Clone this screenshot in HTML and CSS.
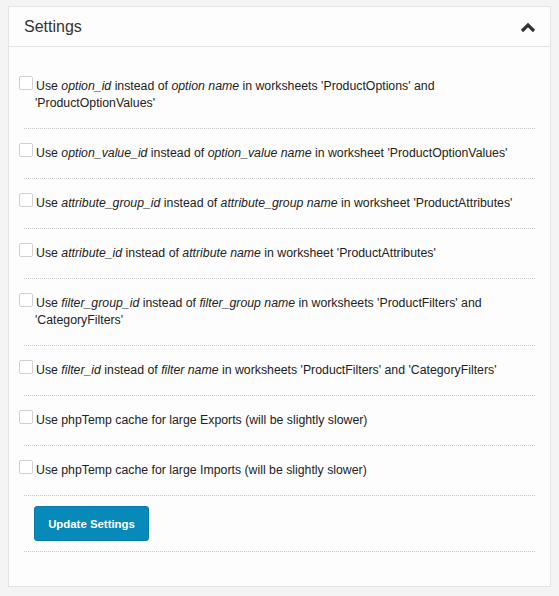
FILE: index.html
```html
<!DOCTYPE html>
<html>
<head>
<meta name="viewport" content="width=device-width, initial-scale=1">
<link rel="stylesheet" href="styles.css">
</head>
<body>

<div class="panel">
	<div class="panel-heading">
		<h3 class="panel-title">Settings</h3>
		<svg class="chevron" width="16" height="11" viewBox="0 0 16 11"><polyline points="2,9 8,3 14,9" fill="none" stroke="#333" stroke-width="3.2"/></svg>
	</div>
	<div class="panel-body">
		<div class="form-row">
			<label class="check"><span class="box"></span>Use <i>option_id</i> instead of <i>option name</i> in worksheets 'ProductOptions' and 'ProductOptionValues'</label>
		</div>
		<div class="form-row">
			<label class="check"><span class="box"></span>Use <i>option_value_id</i> instead of <i>option_value name</i> in worksheet 'ProductOptionValues'</label>
		</div>
		<div class="form-row">
			<label class="check"><span class="box"></span>Use <i>attribute_group_id</i> instead of <i>attribute_group name</i> in worksheet 'ProductAttributes'</label>
		</div>
		<div class="form-row">
			<label class="check"><span class="box"></span>Use <i>attribute_id</i> instead of <i>attribute name</i> in worksheet 'ProductAttributes'</label>
		</div>
		<div class="form-row">
			<label class="check"><span class="box"></span>Use <i>filter_group_id</i> instead of <i>filter_group name</i> in worksheets 'ProductFilters' and 'CategoryFilters'</label>
		</div>
		<div class="form-row">
			<label class="check"><span class="box"></span>Use <i>filter_id</i> instead of <i>filter name</i> in worksheets 'ProductFilters' and 'CategoryFilters'</label>
		</div>
		<div class="form-row">
			<label class="check"><span class="box"></span>Use phpTemp cache for large Exports (will be slightly slower)</label>
		</div>
		<div class="form-row">
			<label class="check"><span class="box"></span>Use phpTemp cache for large Imports (will be slightly slower)</label>
		</div>
		<div class="form-row button-row">
			<button class="btn-primary">Update Settings</button>
		</div>
	</div>
</div>

</body>
</html>
```

FILE: styles.css
```css
body {
	margin: 0;
	padding: 6px 8px 0 8px;
	background: #f4f4f4;
	font-family: "Liberation Sans", Arial, sans-serif;
	font-size: 12.3px;
	color: #222;
}

.panel {
	box-sizing: border-box;
	width: 543px;
	height: 581px;
	background: #fdfdfd;
	border: 1px solid #e4e4e4;
}

.panel-heading {
	display: flex;
	justify-content: space-between;
	align-items: center;
	height: 39px;
	padding: 0 14px 0 15px;
	border-bottom: 1px solid #e4e4e4;
}

.panel-title {
	margin: 0;
	font-size: 16px;
	font-weight: normal;
	color: #333;
}

.chevron {
	display: block;
	margin-top: 1px;
}

.panel-body {
	padding: 15px 15px 0 15px;
}

.form-row {
	padding: 16px 0;
	border-bottom: 1px dotted #c8c8c8;
	line-height: 17px;
}

.check {
	display: block;
	margin-left: -5px;
	padding-left: 16px;
}

.box {
	float: left;
	width: 14px;
	height: 14px;
	box-sizing: border-box;
	border: 1px solid #d0d0d0;
	border-radius: 2px;
	background: #fff;
	margin: -2px 3px 0 -16px;
}

.button-row {
	padding: 10px;
	line-height: normal;
}

.btn-primary {
	display: block;
	width: 115px;
	height: 35px;
	background: #0789ba;
	border: 1px solid #067ba8;
	border-radius: 3px;
	color: #fff;
	font-family: "Liberation Sans", Arial, sans-serif;
	font-size: 11.4px;
	font-weight: bold;
	padding: 0;
}
```
